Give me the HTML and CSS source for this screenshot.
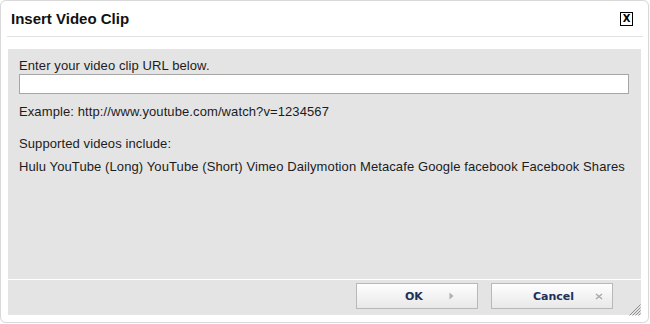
FILE: index.html
```html
<!DOCTYPE html>
<html>
<head>
<meta charset="utf-8">
<title>Insert Video Clip</title>
<link rel="stylesheet" href="styles.css">
</head>
<body>
<div class="dialog">
  <div class="header">
    <div class="title">Insert Video Clip</div>
    <div class="close">X</div>
  </div>
  <div class="panel">
    <div class="content">
      <div class="label">Enter your video clip URL below.</div>
      <input class="url" type="text">
      <div class="example">Example: http://www.youtube.com/watch?v=1234567</div>
      <div class="supported">Supported videos include:</div>
      <div class="list">Hulu YouTube (Long) YouTube (Short) Vimeo Dailymotion Metacafe Google facebook Facebook Shares</div>
    </div>
    <div class="footer">
      <div class="btn btn-ok"><span class="btn-text">OK</span>
        <svg class="btn-icon" width="5" height="8" viewBox="0 0 5 8"><path d="M0.5 0.5 L4.5 4 L0.5 7.5 Z" fill="#b0b0b0"/></svg>
      </div>
      <div class="btn btn-cancel"><span class="btn-text">Cancel</span>
        <svg class="btn-icon" width="8" height="7" viewBox="0 0 8 7"><path d="M1 1 Q4 3.5 7 6 M7 1 Q4 3.5 1 6" stroke="#a8a8a8" stroke-width="1.4" fill="none"/></svg>
      </div>
    </div>
    <svg class="grip" width="13" height="13" viewBox="0 0 13 13">
      <path d="M12.5 1.5 L1.5 12.5 M12.5 4.5 L4.5 12.5 M12.5 7.5 L7.5 12.5 M12.5 10.5 L10.5 12.5" stroke="#8c8c8c" stroke-width="1"/>
    </svg>
  </div>
</div>
</body>
</html>
```

FILE: styles.css
```css
* { box-sizing: border-box; }

body {
  margin: 0;
  background: #ffffff;
  font-family: "Liberation Sans", Arial, sans-serif;
}

.dialog {
  width: 649px;
  height: 323px;
  border: 1px solid #d9d9d9;
  border-radius: 6px;
  background: #ffffff;
  box-shadow: 0 0 2px rgba(0, 0, 0, 0.08);
  display: flex;
  flex-direction: column;
}

.header {
  height: 36px;
  margin: 0 5px 0 6px;
  border-bottom: 1px solid #e2e2e2;
  display: flex;
  align-items: center;
  justify-content: space-between;
  padding: 0 10px 0 4px;
}

.title {
  font-size: 15px;
  font-weight: bold;
  color: #111111;
}

.close {
  width: 13px;
  height: 14px;
  border: 1px solid #000000;
  background: #ffffff;
  font-family: "DejaVu Sans", sans-serif;
  font-size: 10px;
  font-weight: bold;
  line-height: 12px;
  text-align: center;
  color: #000000;
}

.panel {
  position: relative;
  margin: 12px 7px 0 7px;
  height: 266px;
  background: #e4e4e4;
  display: flex;
  flex-direction: column;
}

.content {
  height: 231px;
  padding: 9px 11px 0 11px;
  font-size: 13px;
  line-height: 15px;
  letter-spacing: 0.1px;
  color: #1c1c1c;
  border-bottom: 1px solid #ffffff;
}

.url {
  display: block;
  width: 610px;
  height: 20px;
  margin: 1px 0 0 0;
  border: 1px solid #a6a6a6;
  background: #ffffff;
  padding: 0 3px;
  font-size: 13px;
}

.example { margin-top: 10px; }

.supported { margin-top: 17px; }

.list { margin-top: 8px; white-space: nowrap; }

.footer {
  flex: 1;
  display: flex;
  justify-content: flex-end;
  align-items: flex-start;
  padding: 3px 28px 0 0;
  gap: 13px;
}

.btn {
  width: 122px;
  height: 26px;
  border: 1px solid #b8b8b8;
  background: linear-gradient(#fefefe, #e8e8e8);
  display: flex;
  align-items: center;
  font-family: "DejaVu Sans", sans-serif;
  font-size: 11px;
  font-weight: bold;
  color: #1e2f5a;
}

.btn-ok { padding-left: 48px; }
.btn-ok .btn-icon { margin-left: 26px; }

.btn-cancel { padding-left: 41px; }
.btn-cancel .btn-icon { margin-left: 21px; }

.grip {
  position: absolute;
  right: 0;
  bottom: -1px;
}
```
